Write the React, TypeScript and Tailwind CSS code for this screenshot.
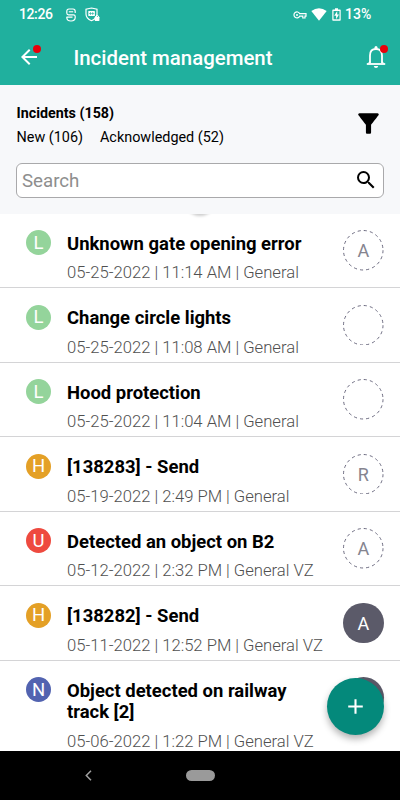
import React, { useState } from "react";
import { MdAdd, MdArrowBack, MdFilterAlt, MdSearch } from "react-icons/md";

type Incident = {
  id: number;
  level: "L" | "H" | "U" | "N";
  title: string;
  info: string;
  assignee: string;
  taken?: boolean;
};

const incidents: Incident[] = [
  {
    id: 1,
    level: "L",
    title: "Unknown gate opening error",
    info: "05-25-2022 | 11:14 AM | General",
    assignee: "A",
  },
  {
    id: 2,
    level: "L",
    title: "Change circle lights",
    info: "05-25-2022 | 11:08 AM | General",
    assignee: "",
  },
  {
    id: 3,
    level: "L",
    title: "Hood protection",
    info: "05-25-2022 | 11:04 AM | General",
    assignee: "",
  },
  {
    id: 4,
    level: "H",
    title: "[138283] - Send",
    info: "05-19-2022 | 2:49 PM | General",
    assignee: "R",
  },
  {
    id: 5,
    level: "U",
    title: "Detected an object on B2",
    info: "05-12-2022 | 2:32 PM | General VZ",
    assignee: "A",
  },
  {
    id: 6,
    level: "H",
    title: "[138282] - Send",
    info: "05-11-2022 | 12:52 PM | General VZ",
    assignee: "A",
    taken: true,
  },
  {
    id: 7,
    level: "N",
    title: "Object detected on railway track [2]",
    info: "05-06-2022 | 1:22 PM | General VZ",
    assignee: "",
    taken: true,
  },
];

const levelColors = {
  L: "bg-[#94d49b]",
  H: "bg-[#e4a026]",
  U: "bg-[#ee4a3f]",
  N: "bg-[#5263b0]",
};

const StatusBar = () => (
  <div className="flex items-center h-[29px] pl-[19px] pr-[29px] font-medium">
    <span className="w-[33px] text-[14px] leading-[21px] tracking-[-0.4px]">12:26</span>

    <svg viewBox="0 0 10 14" className="w-[10px] h-[14px] ml-[13.5px]">
      <path
        d="M9.200 5V3.400Q9.200 1 7 1H3Q.8 1 .8 3.400V5Q.8 6.800 2.600 6.800H7.400Q9.200 6.800 9.200 8.600V9.600Q9.200 13 5 13Q.8 13 .8 9.600V8.800M.8 9.200H6.500"
        fill="none"
        stroke="white"
        strokeWidth="1.2"
      />
      <path d="M2.800 3.800H7.200" stroke="white" strokeWidth="1.100" />
    </svg>

    <svg viewBox="0 0 15 15" className="w-[15px] h-[15px] ml-[9.5px]">
      <path
        d="M6.500 1 12 2.200V7Q12 11.500 6.500 13.700Q1 11.500 1 7V2.200Z"
        fill="none"
        stroke="white"
        strokeWidth="1.200"
      />
      <rect x="3.300" y="4" width="6.600" height="5" rx=".6" fill="white" />
      <path d="M4 6.500H9.200M5.500 5V8M7.700 5V8" stroke="#20b09e" strokeWidth=".6" />
      <rect x="9.800" y="9.800" width="4.600" height="4.200" rx=".4" fill="white" />
      <path d="M10.800 10V9Q12.100 7.300 13.400 9V10" fill="none" stroke="white" />
    </svg>

    <svg viewBox="0 0 14 8" className="w-[14px] h-[8px] ml-auto">
      <path
        d="M6.700 2.700H13V5.200H12V7H9.800V5.200H6.700A3 3 0 1 1 6.700 2.700Z"
        fill="none"
        stroke="white"
        strokeWidth="1.200"
      />
      <circle cx="4" cy="4" r="1" fill="white" />
    </svg>

    <svg viewBox="0 0 16 13" className="w-[16px] h-[13px] ml-[4px]">
      <path d="M.3 3Q8-2.300 15.700 3L8 12.800Z" fill="white" />
    </svg>

    <svg viewBox="0 0 9 13" className="w-[9px] h-[13px] ml-[5px] mr-[4px]">
      <path
        d="M3 .3H6V1.400H8Q8.700 1.400 8.700 2.100V12Q8.700 12.700 8 12.700H1Q.3 12.700 .3 12V2.100Q.3 1.400 1 1.400H3Z"
        fill="white"
      />
      <path d="M1.500 3H7.500V11.300H1.500Z" fill="#20b09e" />
      <path d="M5.200 3 2.200 7.800H4.100V11.300L7 6.500H5.200Z" fill="white" />
    </svg>

    <span className="w-[26px] text-[14px] leading-[21px]">13%</span>
  </div>
);

const BellIcon = () => (
  <svg viewBox="0 0 20 24" className="w-[20px] h-[24px]" fill="none">
    <path
      d="M4 18.200V10.500Q4 4 10 4Q16 4 16 10.500V18.200"
      stroke="white"
      strokeWidth="1.800"
    />
    <path d="M.8 19H19.200" stroke="white" strokeWidth="1.800" />
    <path d="M2.500 18.500 4 16.500M17.500 18.500 16 16.500" stroke="white" strokeWidth="1.200" />
    <path d="M8.500 4V2.600Q8.500 1.100 10 1.100Q11.500 1.100 11.500 2.600V4Z" fill="white" />
    <path d="M7.800 20.900H12.200Q12 23 10 23Q8 23 7.800 20.900Z" fill="white" />
  </svg>
);

const IncidentRow = ({ incident }: { incident: Incident }) => (
  <li className="flex items-start pl-[26px] pr-[16.5px] pb-[3.5px] border-b border-[#d4d4d6] min-h-[74.5px]">
    <span
      className={`flex items-center justify-center w-[25px] h-[25px] mt-[16.7px] pt-px rounded-full text-white text-[18.500px] leading-none shrink-0 ${levelColors[incident.level]}`}
    >
      {incident.level}
    </span>

    <div className="flex-1 pt-[20px] pl-4">
      <h2 className="w-[245px] text-[18.45px] leading-[21.5px] font-bold text-black">
        {incident.title}
      </h2>
      <p className="mt-[8px] text-[16.65px] leading-[20px] font-light text-[#505050] whitespace-nowrap">
        {incident.info}
      </p>
    </div>

    {incident.taken ? (
      <span className="flex items-center justify-center w-[40.5px] h-[40.5px] mt-[16.5px] pt-px rounded-full shrink-0 bg-[#5b5a69] text-white text-[18px]">
        {incident.assignee}
      </span>
    ) : (
      <span className="grid w-[40.5px] h-[40.5px] mt-[16.5px] shrink-0 place-items-center text-[#85848f] text-[18px]">
        <svg viewBox="0 0 40.5 40.5" className="col-start-1 row-start-1 w-full h-full">
          <circle
            cx="20.25"
            cy="20.25"
            r="19.75"
            fill="none"
            stroke="#5b5a72"
            strokeWidth="0.9"
            strokeDasharray="3.1 3.1"
          />
        </svg>
        <span className="col-start-1 row-start-1 pt-px">{incident.assignee}</span>
      </span>
    )}
  </li>
);

const App = () => {
  const [search, setSearch] = useState("");

  return (
    <div className="relative flex flex-col w-[400px] h-[800px] overflow-hidden bg-white font-[Roboto,sans-serif]">
      <header className="h-[85px] shrink-0 bg-[#20b09e] text-white">
        <StatusBar />

        <div className="flex items-center h-[56px] pl-[16.5px] pr-[14.5px]">
          <button className="relative">
            <MdArrowBack size={24} />
            <span className="absolute w-2 h-2 bg-[#e8000b] rounded-full left-[16px] top-0" />
          </button>

          <h1 className="ml-[33px] text-[20.4px] font-medium pt-[3px]">
            Incident management
          </h1>

          <button className="relative ml-auto">
            <BellIcon />
            <span className="absolute w-2 h-2 bg-[#e8000b] rounded-full left-[14px] top-0" />
          </button>
        </div>
      </header>

      <section className="h-[128.5px] shrink-0 px-4 pt-[17px] bg-[#f7f8fa]">
        <div className="flex items-start justify-between h-[60.5px]">
          <div className="pt-[0.5px] pl-[0.5px] text-[14.4px] leading-[20px] text-black">
            <p className="font-bold text-[14.3px]">Incidents (158)</p>
            <p className="flex gap-[17px] mt-[5px]">
              <span>New (106)</span>
              <span>Acknowledged (52)</span>
            </p>
          </div>
          <MdFilterAlt size={31} className="mt-[6px] text-black" />
        </div>

        <div className="flex items-center h-[35.5px] pl-[5px] pr-[5px] bg-white border border-[#a9a9ab] rounded-md">
          <input
            value={search}
            onChange={(e) => setSearch(e.target.value)}
            placeholder="Search"
            className="flex-1 min-w-0 pt-[2px] text-[18.7px] outline-none placeholder:text-[#8e8e8e]"
          />
          <MdSearch size={24} className="text-black" />
        </div>
      </section>

      <main className="relative flex-1 min-h-0 overflow-hidden">
        <div className="absolute w-8 h-8 -top-[32px] left-[184px] rounded-full bg-[#f3f3f3] shadow-[0_2px_3px_rgba(0,0,0,0.2)]" />
        <ul>
          {incidents.map((incident) => (
            <IncidentRow key={incident.id} incident={incident} />
          ))}
        </ul>
      </main>

      <button className="absolute flex items-center justify-center w-[57px] h-[57px] right-[16.5px] top-[677.5px] rounded-full bg-[#04897b] text-white shadow-[0_4px_7px_rgba(0,0,0,0.3)]">
        <MdAdd size={25} />
      </button>

      <nav className="flex items-center h-[49px] shrink-0 bg-black">
        <svg viewBox="0 0 7 11" className="w-[7px] h-[11px] ml-[85px]">
          <path d="M6 .8 1.300 5.500 6 10.200" fill="none" stroke="#a0a0a0" strokeWidth="1.500" />
        </svg>
        <span className="w-[29px] h-[11px] ml-[94px] rounded-full bg-[#9a9a9a]" />
      </nav>
    </div>
  );
};

export default App;
